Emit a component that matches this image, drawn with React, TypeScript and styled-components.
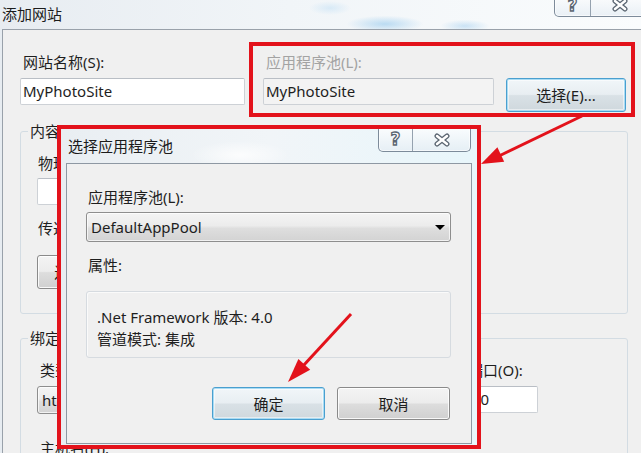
import React from 'react';
import styled, { createGlobalStyle, css } from 'styled-components';

const RED = '#e3121b';

const GlobalStyle = createGlobalStyle`
  html, body {
    margin: 0;
    padding: 0;
    background: #f0f0f0;
  }
  body {
    font-family: "Noto Sans", "Noto Sans CJK SC", sans-serif;
    font-size: 15px;
    line-height: 20px;
    color: #1e1e1e;
  }
  * {
    box-sizing: border-box;
  }
`;

const Window = styled.div`
  position: relative;
  width: 641px;
  height: 453px;
  overflow: hidden;
  display: flex;
  flex-direction: column;
  background:
    radial-gradient(ellipse 55px 12px at 385px 24px, rgba(140, 196, 236, 0.55), transparent 70%),
    radial-gradient(ellipse 35px 9px at 465px 26px, rgba(150, 200, 238, 0.45), transparent 70%),
    radial-gradient(ellipse 30px 10px at 330px 8px, rgba(190, 222, 245, 0.5), transparent 70%),
    linear-gradient(to right, #e7ecf1 0%, #f1f5f8 45%, #fafcfd 100%);
`;

const TitleBar = styled.div<{ $height: number; $pad: number }>`
  flex: none;
  height: ${p => p.$height}px;
  display: flex;
  align-items: flex-start;
  padding-left: ${p => p.$pad}px;
`;

const Title = styled.span<{ $lh: number }>`
  line-height: ${p => p.$lh}px;
  color: #1b1b1b;
`;

const CaptionGroup = styled.div<{ $top: number; $right: number }>`
  display: flex;
  margin-left: auto;
  margin-top: ${p => p.$top}px;
  margin-right: ${p => p.$right}px;
  border: 1px solid #7d8b9a;
  border-top: none;
  border-radius: 0 0 5px 5px;
  overflow: hidden;
  background: linear-gradient(rgba(255, 255, 255, 0.75), rgba(228, 236, 243, 0.75));
  box-shadow: inset 0 0 0 1px rgba(255, 255, 255, 0.6);
`;

const CaptionButton = styled.div<{ $w: number; $h: number }>`
  width: ${p => p.$w}px;
  height: ${p => p.$h}px;
  display: flex;
  align-items: center;
  justify-content: center;

  & + & {
    border-left: 1px solid #95a2af;
  }
`;

const HelpGlyph = styled.span`
  font-family: "DejaVu Sans", sans-serif;
  font-weight: bold;
  font-size: 17px;
  line-height: 17px;
  color: #ffffff;
  -webkit-text-stroke: 1.3px #5b6672;
`;

const CloseGlyph = () => (
  <svg width="18" height="14" viewBox="0 0 18 14">
    <g strokeLinecap="round">
      <line x1="4" y1="3" x2="14" y2="11" stroke="#5b6672" strokeWidth="5" />
      <line x1="14" y1="3" x2="4" y2="11" stroke="#5b6672" strokeWidth="5" />
      <line x1="4" y1="3" x2="14" y2="11" stroke="#ffffff" strokeWidth="2.4" />
      <line x1="14" y1="3" x2="4" y2="11" stroke="#ffffff" strokeWidth="2.4" />
    </g>
  </svg>
);

const Client = styled.div`
  flex: 1;
  margin-left: 2px;
  border-left: 1px solid #99a1aa;
  border-top: 1px solid #99a1aa;
  background: #f0f0f0;
  padding: 22px 0 0 17px;
`;

const Row = styled.div<{ $gap: number; $mt?: number }>`
  display: flex;
  align-items: flex-start;
  gap: ${p => p.$gap}px;
  margin-top: ${p => p.$mt ?? 0}px;
`;

const Field = styled.div<{ $w?: number }>`
  display: flex;
  flex-direction: column;
  width: ${p => (p.$w ? `${p.$w}px` : 'auto')};
`;

const Label = styled.div<{ $disabled?: boolean; $mt?: number; $mb?: number; $pl?: number }>`
  line-height: 20px;
  white-space: nowrap;
  padding-left: ${p => p.$pl ?? 3}px;
  margin-top: ${p => p.$mt ?? 0}px;
  margin-bottom: ${p => p.$mb ?? 6}px;
  color: ${p => (p.$disabled ? '#a3a3a3' : '#1e1e1e')};
`;

const TextBox = styled.div<{ $w: number; $disabled?: boolean; $pl?: number }>`
  width: ${p => p.$w}px;
  height: 27px;
  border: 1px solid #cdd1d6;
  border-top-color: #b9bec5;
  border-radius: 2px;
  background: ${p => (p.$disabled ? '#f3f3f3' : '#ffffff')};
  padding-left: ${p => p.$pl ?? 2}px;
  line-height: 25px;
  white-space: nowrap;
  overflow: hidden;
`;

const ComboBox = styled.div<{ $w?: number; $h: number }>`
  position: relative;
  width: ${p => (p.$w ? `${p.$w}px` : '100%')};
  height: ${p => p.$h}px;
  border: 1px solid #8e8e8e;
  border-radius: 3px;
  background: linear-gradient(#f4f4f4 0%, #ececec 45%, #dedede 55%, #d3d3d3 100%);
  box-shadow: inset 0 0 0 1px rgba(255, 255, 255, 0.7);
  padding-left: 4px;
  line-height: ${p => p.$h - 2}px;
  white-space: nowrap;
  overflow: hidden;

  &::after {
    content: '';
    position: absolute;
    right: 5px;
    top: 50%;
    margin-top: -2px;
    border-left: 5px solid transparent;
    border-right: 5px solid transparent;
    border-top: 5px solid #000000;
  }
`;

const PushButton = styled.div<{ $w: number; $h?: number; $default?: boolean }>`
  width: ${p => p.$w}px;
  height: ${p => p.$h ?? 34}px;
  flex: none;
  display: flex;
  align-items: center;
  justify-content: center;
  white-space: nowrap;
  border: 1px solid #8a8a8a;
  border-radius: 3px;
  background: linear-gradient(#f4f4f4 0%, #ececec 48%, #dddddd 52%, #d0d0d0 100%);
  box-shadow: inset 0 0 0 1px rgba(255, 255, 255, 0.85);
  color: #1e1e1e;

  ${p =>
    p.$default &&
    css`
      border-color: #4a9fcf;
      background: linear-gradient(#f1f6f9 0%, #e8eef2 48%, #d9e1e6 52%, #cfd8dd 100%);
      box-shadow: inset 0 0 0 1px #a9dcf4, inset 0 0 0 2px rgba(255, 255, 255, 0.5);
    `}
`;

const Group = styled.fieldset<{ $mt: number }>`
  margin: ${p => p.$mt}px 0 0;
  width: 608px;
  padding: 0 0 0 7px;
  border: 1px solid #d3dce3;
  border-radius: 3px;
  min-inline-size: 0;
`;

const Legend = styled.legend`
  padding: 0 2px;
  line-height: 20px;
  color: #1e1e1e;
`;

const GroupBody = styled.div<{ $pt: number; $pb: number }>`
  padding: ${p => p.$pt}px 9px ${p => p.$pb}px 9px;
`;

const Dialog = styled.div`
  position: absolute;
  left: 60px;
  top: 127px;
  width: 418px;
  height: 320px;
  display: flex;
  flex-direction: column;
  border-radius: 6px 6px 0 0;
  background:
    radial-gradient(ellipse 70px 20px at 180px 28px, rgba(255, 255, 255, 0.8), transparent 70%),
    linear-gradient(to right, #e9eef2 0%, #f1f5f8 50%, #e8f6fb 100%);
  box-shadow: 0 0 0 1px rgba(90, 110, 130, 0.45);
`;

const DialogClient = styled.div`
  flex: 1;
  margin: 0 6px 3px;
  border: 1px solid #8e98a3;
  background: #f0f0f0;
  padding: 23px 20px 0 19px;
  display: flex;
  flex-direction: column;
`;

const PropBox = styled.div`
  height: 67px;
  border: 1px solid #d6dbe0;
  border-radius: 3px;
  box-shadow: inset 1px 1px 0 #fafafa;
  padding: 14px 10px 0;
  line-height: 22px;
`;

const ButtonRow = styled.div`
  display: flex;
  justify-content: flex-end;
  gap: 12px;
  margin-top: 29px;
  padding-right: 1px;
`;

const Highlight = styled.div<{ $x: number; $y: number; $w: number; $h: number }>`
  position: absolute;
  left: ${p => p.$x}px;
  top: ${p => p.$y}px;
  width: ${p => p.$w}px;
  height: ${p => p.$h}px;
  border: 4px solid ${RED};
  pointer-events: none;
`;

const Arrows = styled.svg`
  position: absolute;
  left: 0;
  top: 0;
  pointer-events: none;
`;

const Caption = ({ top, right, help, close, h }: { top: number; right: number; help: number; close: number; h: number }) => (
  <CaptionGroup $top={top} $right={right}>
    <CaptionButton $w={help} $h={h}>
      <HelpGlyph>?</HelpGlyph>
    </CaptionButton>
    <CaptionButton $w={close} $h={h}>
      <CloseGlyph />
    </CaptionButton>
  </CaptionGroup>
);

const App = () => (
  <>
    <GlobalStyle />
    <Window>
      <TitleBar $height={29} $pad={2}>
        <Title $lh={28}>添加网站</Title>
        <Caption top={-6} right={-8} help={35} close={58} h={22} />
      </TitleBar>
      <Client>
        <Row $gap={18}>
          <Field $w={225}>
            <Label>网站名称(S):</Label>
            <TextBox $w={225}>MyPhotoSite</TextBox>
          </Field>
          <Field>
            <Label $disabled>应用程序池(L):</Label>
            <Row $gap={12}>
              <TextBox $w={231} $disabled>MyPhotoSite</TextBox>
              <PushButton $w={120} $default>选择(E)...</PushButton>
            </Row>
          </Field>
        </Row>

        <Group $mt={9}>
          <Legend>内容目录</Legend>
          <GroupBody $pt={12} $pb={24}>
            <Label $pl={1} $mb={5}>物理路径(P):</Label>
            <Row $gap={8}>
              <TextBox $w={360} />
              <PushButton $w={30} $h={27}>...</PushButton>
            </Row>
            <Label $pl={1} $mt={13} $mb={17}>传递身份验证</Label>
            <Row $gap={10}>
              <PushButton $w={110}>连接为(C)...</PushButton>
              <PushButton $w={120}>测试设置(G)...</PushButton>
            </Row>
          </GroupBody>
        </Group>

        <Group $mt={14}>
          <Legend>绑定</Legend>
          <GroupBody $pt={12} $pb={24}>
            <Row $gap={14}>
              <Field $w={110}>
                <Label $pl={3} $mb={6}>类型(T):</Label>
                <ComboBox $h={28}>http</ComboBox>
              </Field>
              <Field $w={287}>
                <Label $pl={3} $mb={6}>IP 地址(I):</Label>
                <ComboBox $h={28}>全部未分配</ComboBox>
              </Field>
              <Field $w={76}>
                <Label $pl={6} $mb={6}>端口(O):</Label>
                <TextBox $w={76} $pl={9}>80</TextBox>
              </Field>
            </Row>
            <Label $pl={3} $mt={24}>主机名(H):</Label>
          </GroupBody>
        </Group>
      </Client>

      <Highlight $x={249} $y={42} $w={386} $h={75} />

      <Dialog>
        <TitleBar $height={36} $pad={8}>
          <Title $lh={38}>选择应用程序池</Title>
          <Caption top={1} right={7} help={33} close={58} h={23} />
        </TitleBar>
        <DialogClient>
          <Label $pl={2} $mb={5}>应用程序池(L):</Label>
          <ComboBox $h={30}>DefaultAppPool</ComboBox>
          <Label $pl={2} $mt={13} $mb={16}>属性:</Label>
          <PropBox>
            <div>.Net Framework 版本: 4.0</div>
            <div>管道模式: 集成</div>
          </PropBox>
          <ButtonRow>
            <PushButton $w={113} $h={33} $default>确定</PushButton>
            <PushButton $w={113} $h={33}>取消</PushButton>
          </ButtonRow>
        </DialogClient>
      </Dialog>

      <Highlight $x={57} $y={125} $w={424} $h={324} />

      <Arrows width="641" height="453" viewBox="0 0 641 453">
        <line x1="582" y1="116" x2="499" y2="156" stroke={RED} strokeWidth="3" />
        <polygon points="481,164 497.4,147.3 504.2,161.7" fill={RED} />
        <line x1="351" y1="314" x2="303" y2="366" stroke={RED} strokeWidth="3" />
        <polygon points="288,382 298.4,359 310.2,369.8" fill={RED} />
      </Arrows>
    </Window>
  </>
);

export default App;
